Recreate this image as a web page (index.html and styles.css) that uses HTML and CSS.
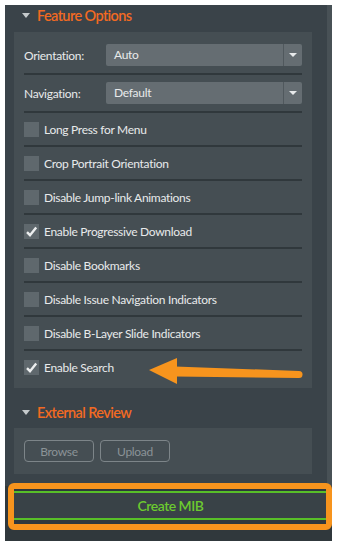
FILE: index.html
```html
<!DOCTYPE html>
<html lang="en">
<head>
  <meta charset="UTF-8">
  <meta name="viewport" content="width=device-width, initial-scale=1.0">
  <title>Feature Options</title>
  <link rel="stylesheet" href="styles.css">
</head>
<body>
  <div class="panel">
    <div class="scroll-area">
      <div class="content">
        <div class="section-header">
          <span class="caret"></span>
          <span>Feature Options</span>
        </div>
        <div class="section-box options-box">
          <div class="row select-row">
            <label class="row-label">Orientation:</label>
            <div class="select">
              <span class="select-value">Auto</span>
              <span class="select-arrow"><span class="arrow-down"></span></span>
            </div>
          </div>
          <div class="row select-row">
            <label class="row-label">Navigation:</label>
            <div class="select">
              <span class="select-value">Default</span>
              <span class="select-arrow"><span class="arrow-down"></span></span>
            </div>
          </div>
          <div class="row check-row">
            <span class="checkbox"></span>
            <span>Long Press for Menu</span>
          </div>
          <div class="row check-row">
            <span class="checkbox"></span>
            <span>Crop Portrait Orientation</span>
          </div>
          <div class="row check-row">
            <span class="checkbox"></span>
            <span>Disable Jump-link Animations</span>
          </div>
          <div class="row check-row">
            <span class="checkbox checked">
              <svg viewBox="0 0 15 15" width="15" height="15"><path d="M3 8.2 L6 11.2 L12.2 3.6" fill="none" stroke="#eceeef" stroke-width="2.4"/></svg>
            </span>
            <span>Enable Progressive Download</span>
          </div>
          <div class="row check-row">
            <span class="checkbox"></span>
            <span>Disable Bookmarks</span>
          </div>
          <div class="row check-row">
            <span class="checkbox"></span>
            <span>Disable Issue Navigation Indicators</span>
          </div>
          <div class="row check-row">
            <span class="checkbox"></span>
            <span>Disable B-Layer Slide Indicators</span>
          </div>
          <div class="row check-row last">
            <span class="checkbox checked">
              <svg viewBox="0 0 15 15" width="15" height="15"><path d="M3 8.2 L6 11.2 L12.2 3.6" fill="none" stroke="#eceeef" stroke-width="2.4"/></svg>
            </span>
            <span>Enable Search</span>
          </div>
        </div>

        <div class="section-header second">
          <span class="caret"></span>
          <span>External Review</span>
        </div>
        <div class="section-box review-box">
          <button class="ghost-btn">Browse</button>
          <button class="ghost-btn">Upload</button>
        </div>
      </div>
      <div class="scrollbar"></div>
    </div>
    <div class="footer">
      <button class="create-btn">Create MIB</button>
    </div>
  </div>

  <!-- annotation overlays -->
  <svg class="pointer-arrow" width="160" height="30" viewBox="0 0 160 30">
    <path d="M26 8.5 L150 13 L150 20 L26 18.5 Z" fill="#f7941d"/>
    <circle cx="150" cy="16.5" r="3.5" fill="#f7941d"/>
    <path d="M0 12 L28 0 L28 26 Z" fill="#f7941d"/>
  </svg>
  <div class="highlight-box"></div>
</body>
</html>
```

FILE: styles.css
```css
/* General Styles */
body {
  margin: 0;
  background-color: #fff;
  font-family: 'Lato', 'Noto Sans', sans-serif;
  font-size: 12px;
  letter-spacing: -0.3px;
  color: #e8eaeb;
}

.panel {
  margin: 5px 0 0 5px;
  width: 327px;
  height: 536px;
  background-color: #3a4349;
  display: flex;
  flex-direction: column;
}

.scroll-area {
  display: flex;
  height: 481px;
}

.content {
  flex: 1;
  padding-left: 9px;
}

.scrollbar {
  width: 5px;
  background-color: #485156;
}

/* Section headers */
.section-header {
  height: 20px;
  display: flex;
  align-items: center;
  gap: 7px;
  padding-left: 8px;
  margin-bottom: 7px;
  color: #f26a22;
  font-size: 14.5px;
  font-weight: 600;
  letter-spacing: -0.6px;
}

.section-header.second {
  margin-top: 14px;
  margin-bottom: 6px;
}

.caret {
  width: 0;
  height: 0;
  border-left: 4px solid transparent;
  border-right: 4px solid transparent;
  border-top: 5px solid #c5cacc;
}

.section-box {
  width: 298px;
  box-sizing: border-box;
  background-color: #454e53;
  padding: 0 10px;
}

.options-box {
  padding-top: 5px;
  padding-bottom: 5px;
}

/* Rows */
.row {
  display: flex;
  align-items: center;
  border-bottom: 2px solid #30383c;
}

.row.last {
  border-bottom: none;
}

.select-row {
  height: 36px;
}

.check-row {
  height: 32px;
  gap: 5px;
}

.row-label {
  width: 82px;
}

.select {
  flex: 1;
  height: 22px;
  display: flex;
  background-color: #656d72;
  border-radius: 2px;
}

.select-value {
  flex: 1;
  padding-left: 8px;
  line-height: 22px;
}

.select-arrow {
  width: 18px;
  border-left: 1px solid #50585d;
  display: flex;
  align-items: center;
  justify-content: center;
}

.arrow-down {
  width: 0;
  height: 0;
  border-left: 4px solid transparent;
  border-right: 4px solid transparent;
  border-top: 4px solid #e8eaeb;
}

.checkbox {
  width: 15px;
  height: 15px;
  background-color: #5f686d;
  display: flex;
}

/* External review */
.review-box {
  display: flex;
  gap: 6px;
  padding-top: 12px;
  padding-bottom: 12px;
}

.ghost-btn {
  width: 70px;
  height: 22px;
  background: none;
  border: 1px solid #7d8589;
  border-radius: 4px;
  color: #8b9397;
  font-family: inherit;
  font-size: 12px;
  letter-spacing: -0.3px;
}

/* Footer */
.footer {
  flex: 1;
  background-color: #30383c;
  padding: 5px 1px 0 5px;
}

.create-btn {
  width: 100%;
  height: 29px;
  background-color: #394247;
  border: 2px solid #58bf28;
  border-radius: 0 4px 4px 0;
  color: #6cca2f;
  font-family: inherit;
  font-size: 14px;
  font-weight: 600;
  letter-spacing: -0.5px;
}

/* Annotation overlays */
.highlight-box {
  position: absolute;
  left: 8px;
  top: 483px;
  width: 312px;
  height: 35px;
  border: 6px solid #f7941d;
  border-radius: 6px;
}

.pointer-arrow {
  position: absolute;
  left: 149px;
  top: 358px;
}
```
